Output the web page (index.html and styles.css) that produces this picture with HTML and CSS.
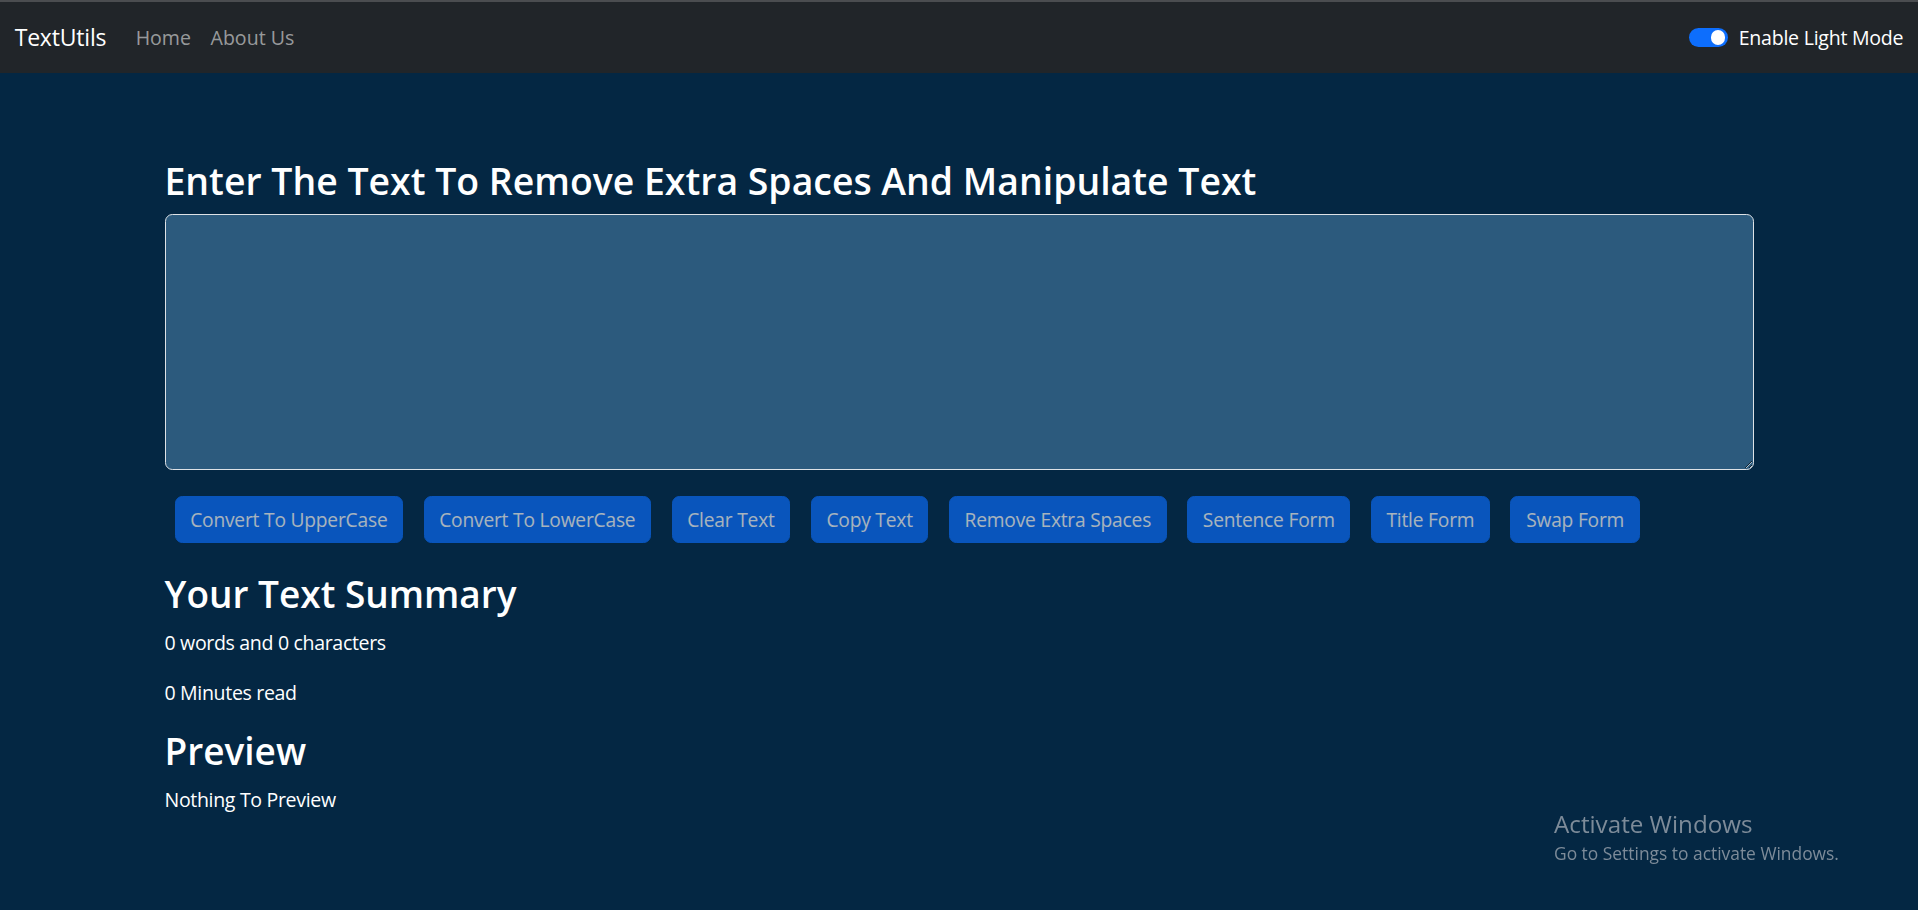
FILE: index.html
```html
<!DOCTYPE html>
<html lang="en">
<head>
<meta charset="utf-8">
<title>TextUtils - Home</title>
<link rel="stylesheet" href="styles.css">
</head>
<body>
<nav class="navbar">
  <div class="nav-left">
    <a class="brand" href="#">TextUtils</a>
    <ul class="nav-links">
      <li><a class="nav-link" href="#">Home</a></li>
      <li><a class="nav-link" href="#">About Us</a></li>
    </ul>
  </div>
  <div class="switch-wrap">
    <span class="switch"><span class="knob"></span></span>
    <label class="switch-label">Enable Light Mode</label>
  </div>
</nav>
<main class="container">
  <h1 class="title">Enter The Text To Remove Extra Spaces And Manipulate Text</h1>
  <textarea class="text-input" rows="8"></textarea>
  <div class="btn-row">
    <button class="btn">Convert To UpperCase</button>
    <button class="btn">Convert To LowerCase</button>
    <button class="btn">Clear Text</button>
    <button class="btn">Copy Text</button>
    <button class="btn">Remove Extra Spaces</button>
    <button class="btn">Sentence Form</button>
    <button class="btn">Title Form</button>
    <button class="btn">Swap Form</button>
  </div>
  <section class="summary">
    <h2 class="sub">Your Text Summary</h2>
    <p class="line">0 words and 0 characters</p>
    <p class="line">0 Minutes read</p>
    <h2 class="sub">Preview</h2>
    <p class="line">Nothing To Preview</p>
  </section>
</main>
<div class="watermark">
  <div class="wm-title">Activate Windows</div>
  <div class="wm-sub">Go to Settings to activate Windows.</div>
</div>
</body>
</html>
```
FILE: styles.css
```css
html, body {
  margin: 0;
  padding: 0;
}
body {
  background: #042743;
  color: #ffffff;
  font-family: "Open Sans", "Noto Sans", sans-serif;
  font-size: 19.57px;
  line-height: 1.5;
  min-height: 910px;
}
.navbar {
  border-top: 2px solid #4b4d50;
  background: #212529;
  height: 70.7px;
  padding: 0 14.7px;
  display: flex;
  align-items: center;
  justify-content: space-between;
}
.nav-left {
  display: flex;
  align-items: center;
}
.brand {
  color: #ffffff;
  text-decoration: none;
  font-size: 23px;
  letter-spacing: -0.2px;
  line-height: 36.7px;
  margin-right: 19.6px;
}
.nav-links {
  list-style: none;
  margin: 0;
  padding: 0;
  display: flex;
}
.nav-link {
  display: block;
  padding: 0 9.8px;
  color: rgba(255, 255, 255, 0.55);
  text-decoration: none;
  line-height: 29.35px;
}
.switch-wrap {
  display: flex;
  align-items: center;
  gap: 11px;
}
.switch {
  width: 39.1px;
  height: 19.6px;
  border-radius: 10px;
  background: #0d6efd;
  display: flex;
  align-items: center;
  justify-content: flex-end;
  padding: 0 2.45px;
  box-sizing: border-box;
}
.knob {
  width: 14.7px;
  height: 14.7px;
  border-radius: 50%;
  background: #ffffff;
}
.switch-label {
  line-height: 29.35px;
  letter-spacing: -0.25px;
}
.container {
  width: 1589px;
  margin: 0 auto;
  padding-top: 86.3px;
}
.title {
  font-size: 37.4px;
  font-weight: 600;
  line-height: 43.7px;
  margin: 0 0 11.3px;
}
.text-input {
  display: block;
  width: 100%;
  height: 256px;
  box-sizing: border-box;
  margin: 0;
  border: 1px solid #dee2e6;
  border-radius: 7.3px;
  background: #2c5a7d;
  color: #ffffff;
  font: inherit;
  padding: 7.3px 14.7px;
  resize: vertical;
}
.btn-row {
  display: flex;
  gap: 20.4px;
  margin-top: 26px;
  padding-left: 10px;
}
.btn {
  height: 47px;
  padding: 0 14.7px;
  border: 1px solid #0d6efd;
  border-radius: 7.3px;
  background: #0d6efd;
  color: #ffffff;
  opacity: 0.65;
  font-family: inherit;
  font-size: 19.2px;
  letter-spacing: -0.2px;
  line-height: 29.35px;
  white-space: nowrap;
}
.summary {
  margin-top: 28px;
}
.sub {
  font-size: 37px;
  font-weight: 600;
  line-height: 46.6px;
  margin: 0 0 10.6px;
}
.line {
  margin: 0 0 20.65px;
  line-height: 29.35px;
  letter-spacing: -0.34px;
}
.watermark {
  position: fixed;
  left: 1554px;
  top: 809.4px;
  color: #7d8b99;
}
.wm-title {
  font-size: 24.2px;
  line-height: 29px;
}
.wm-sub {
  font-size: 17.4px;
  line-height: 23.5px;
  margin-top: 3.2px;
}
```
